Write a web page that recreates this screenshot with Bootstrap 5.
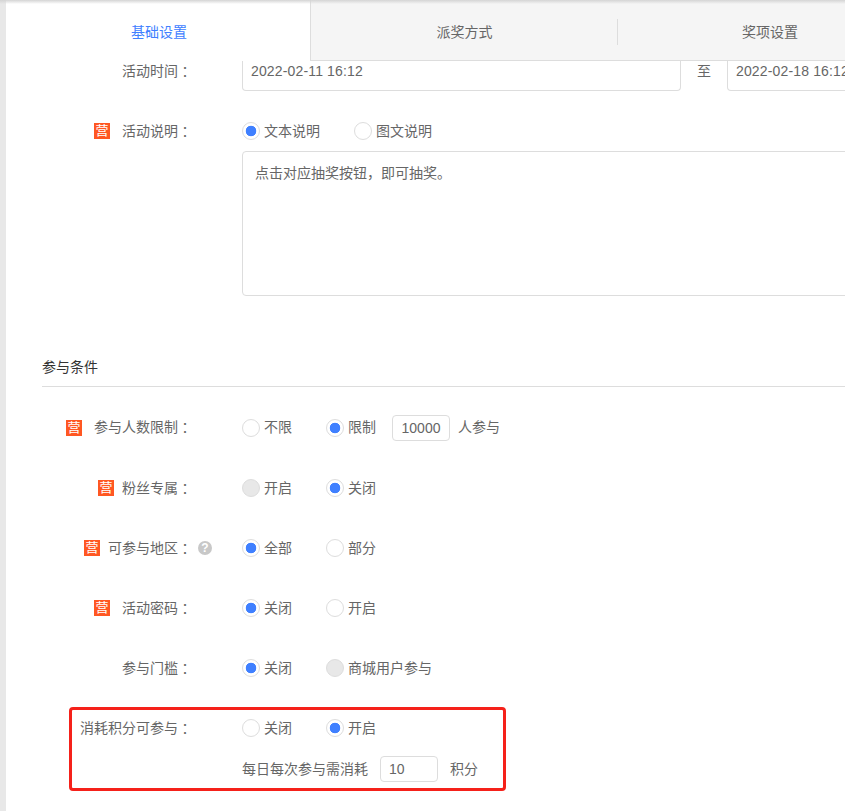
<!DOCTYPE html>
<html lang="zh-CN">
<head>
  <meta charset="UTF-8">
  <meta name="viewport" content="width=device-width, initial-scale=1.0">
  <title>活动设置</title>
  <link href="https://cdn.jsdelivr.net/npm/bootstrap@5.3.0/dist/css/bootstrap.min.css" rel="stylesheet">
  <style>
    html, body { height: 811px; overflow: hidden; }
    body {
      background: #e8e8e8;
      font-family: "Liberation Sans", "Noto Sans CJK SC", sans-serif;
      font-size: 14px;
      color: #666;
    }
    /* shadow from the header above the frame */
    body::before {
      content: "";
      position: fixed;
      top: 0; left: 0; right: 0;
      height: 4px;
      background: linear-gradient(#d4d4d4, rgba(255,255,255,0));
      z-index: 5;
    }
    .page-panel { margin-left: 6px; width: 1000px; height: 811px; background: #fff; }

    /* tabs */
    .step-tabs { height: 61px; background: #f5f5f5; border-bottom: 1px solid #ddd; }
    .step-tabs .nav-link {
      width: 304px;
      height: 60px;
      color: #666;
      padding: 0;
      line-height: 64px;
      text-align: center;
      position: relative;
    }
    .step-tabs .nav-link.active { width: 305px; height: 61px; padding-left: 2px; color: #4080ff; background: #fff; border-right: 1px solid #ddd; }
    .step-tabs .nav-link.with-line { width: 307px; }
    .step-tabs .nav-link.with-line::after {
      content: "";
      position: absolute;
      right: 0; top: 19px;
      width: 1px; height: 26px;
      background: #ddd;
    }

    .field-row { display: flex; align-items: center; height: 60px; }
    .field-label { width: 186px; flex: none; display: flex; justify-content: flex-end; align-items: center; white-space: nowrap; }
    .field-body { margin-left: 50px; display: flex; align-items: center; white-space: nowrap; position: relative; }
    /* full width colon sits centred in the reference */
    .cjk-mid { font-family: "Noto Sans CJK TC", sans-serif; }

    .ying-tag {
      width: 16px; height: 16px;
      line-height: 16px;
      text-align: center;
      background: #ff5722;
      color: #fff;
      font-size: 13px;
      flex: none;
      margin-right: 12px;
    }
    .ying-tag.tight { margin-right: 8px; }
    .help-dot {
      position: absolute;
      left: -44px; top: 50%;
      margin-top: -7px;
      width: 14px; height: 14px;
    }

    /* time row, the tabs cut off its top */
    .time-row { height: 30px; align-items: flex-start; }
    .time-row .field-body { align-items: flex-start; }
    .time-box {
      width: 439px; height: 30px;
      border: 1px solid #ddd;
      border-top: 0;
      border-radius: 0 0 4px 4px;
      padding: 0 8px;
      line-height: 20px;
      letter-spacing: .15px;
      color: #666;
      flex: none;
    }
    .time-sep { width: 46px; text-align: center; line-height: 20px; flex: none; }

    .desc-row { height: 40px; margin-top: 20px; }
    .people-row { height: 61px; margin-top: 10px; }

    /* radios */
    .radio-item { display: flex; align-items: center; margin: 0 34px 0 0; padding: 0; min-height: 0; }
    .radio-item.short-gap { margin-right: 16px; }
    .radio-item .form-check-input {
      float: none;
      width: 18px; height: 18px;
      margin: 0 4px 0 0;
      border: 1px solid #ddd;
      background-color: #fff;
      opacity: 1;
      flex: none;
    }
    .radio-item .form-check-input:checked {
      background-color: #fff;
      border-color: #ddd;
      background-image: radial-gradient(circle, #4080ff 5px, transparent 5.6px);
    }
    .radio-item .form-check-input:disabled { background-color: #e8e8e8; }
    .radio-item .form-check-label { opacity: 1 !important; color: #666; }

    .desc-box {
      width: 750px; height: 145px;
      margin-left: 236px;
      border: 1px solid #ddd;
      border-radius: 4px;
      padding: 9px 12px;
      line-height: 22px;
      color: #666;
    }
    .section-head {
      margin: 61px 0 0 36px;
      height: 30px;
      line-height: 20px;
      color: #333;
      border-bottom: 1px solid #ddd;
    }
    .num-box {
      width: 58px; height: 26px;
      flex: none;
      border: 1px solid #ddd;
      border-radius: 4px;
      padding: 0 8px;
      font-size: 14px;
      color: #666;
      box-shadow: none;
    }
    .red-frame {
      margin: 9px 0 0 63px;
      width: 437px; height: 84px;
      border: 3px solid #f5211a;
      border-radius: 4px;
    }
    .red-frame .field-row { height: 36px; }
    .red-frame .field-label { width: 120px; }
    .cost-line { margin: 10px 0 0 170px; white-space: nowrap; }
    .cost-line .num-box { margin: 0 12px; }
  </style>
</head>
<body>
  <div class="page-panel">
    <div class="nav step-tabs">
      <a class="nav-link active" href="#">基础设置</a>
      <a class="nav-link with-line" href="#">派奖方式</a>
      <a class="nav-link" href="#">奖项设置</a>
    </div>

    <div class="field-row time-row">
      <div class="field-label">活动时间<span class="cjk-mid">：</span></div>
      <div class="field-body">
        <div class="time-box">2022-02-11 16:12</div>
        <div class="time-sep">至</div>
        <div class="time-box">2022-02-18 16:12</div>
      </div>
    </div>

    <div class="field-row desc-row">
      <div class="field-label"><span class="ying-tag">营</span>活动说明<span class="cjk-mid">：</span></div>
      <div class="field-body">
        <div class="form-check radio-item"><input class="form-check-input" type="radio" name="desc" checked><label class="form-check-label">文本说明</label></div>
        <div class="form-check radio-item"><input class="form-check-input" type="radio" name="desc"><label class="form-check-label">图文说明</label></div>
      </div>
    </div>
    <div class="desc-box">点击对应抽奖按钮<span class="cjk-mid">，</span>即可抽奖。</div>

    <div class="section-head">参与条件</div>

    <div class="field-row people-row">
      <div class="field-label"><span class="ying-tag">营</span>参与人数限制<span class="cjk-mid">：</span></div>
      <div class="field-body">
        <div class="form-check radio-item"><input class="form-check-input" type="radio" name="limit"><label class="form-check-label">不限</label></div>
        <div class="form-check radio-item short-gap"><input class="form-check-input" type="radio" name="limit" checked><label class="form-check-label">限制</label></div>
        <input class="form-control num-box text-center" value="10000">
        <span class="ms-2">人参与</span>
      </div>
    </div>

    <div class="field-row">
      <div class="field-label"><span class="ying-tag tight">营</span>粉丝专属<span class="cjk-mid">：</span></div>
      <div class="field-body">
        <div class="form-check radio-item"><input class="form-check-input" type="radio" name="fans" disabled><label class="form-check-label">开启</label></div>
        <div class="form-check radio-item"><input class="form-check-input" type="radio" name="fans" checked><label class="form-check-label">关闭</label></div>
      </div>
    </div>

    <div class="field-row">
      <div class="field-label"><span class="ying-tag tight">营</span>可参与地区<span class="cjk-mid">：</span></div>
      <div class="field-body">
        <svg class="help-dot" viewBox="0 0 14 14"><circle cx="7" cy="7" r="7" fill="#c8c8c8"/><text x="7" y="11.2" text-anchor="middle" fill="#fff" font-size="12" font-weight="700" font-family="Liberation Sans, sans-serif">?</text></svg>
        <div class="form-check radio-item"><input class="form-check-input" type="radio" name="area" checked><label class="form-check-label">全部</label></div>
        <div class="form-check radio-item"><input class="form-check-input" type="radio" name="area"><label class="form-check-label">部分</label></div>
      </div>
    </div>

    <div class="field-row">
      <div class="field-label"><span class="ying-tag">营</span>活动密码<span class="cjk-mid">：</span></div>
      <div class="field-body">
        <div class="form-check radio-item"><input class="form-check-input" type="radio" name="pwd" checked><label class="form-check-label">关闭</label></div>
        <div class="form-check radio-item"><input class="form-check-input" type="radio" name="pwd"><label class="form-check-label">开启</label></div>
      </div>
    </div>

    <div class="field-row">
      <div class="field-label">参与门槛<span class="cjk-mid">：</span></div>
      <div class="field-body">
        <div class="form-check radio-item"><input class="form-check-input" type="radio" name="gate" checked><label class="form-check-label">关闭</label></div>
        <div class="form-check radio-item"><input class="form-check-input" type="radio" name="gate" disabled><label class="form-check-label">商城用户参与</label></div>
      </div>
    </div>

    <div class="red-frame">
      <div class="field-row">
        <div class="field-label">消耗积分可参与<span class="cjk-mid">：</span></div>
        <div class="field-body">
          <div class="form-check radio-item"><input class="form-check-input" type="radio" name="cost"><label class="form-check-label">关闭</label></div>
          <div class="form-check radio-item"><input class="form-check-input" type="radio" name="cost" checked><label class="form-check-label">开启</label></div>
        </div>
      </div>
      <div class="cost-line d-flex align-items-center">
        <span>每日每次参与需消耗</span>
        <input class="form-control num-box" value="10">
        <span>积分</span>
      </div>
    </div>
  </div>

  <script src="https://cdn.jsdelivr.net/npm/bootstrap@5.3.0/dist/js/bootstrap.bundle.min.js"></script>
</body>
</html>
